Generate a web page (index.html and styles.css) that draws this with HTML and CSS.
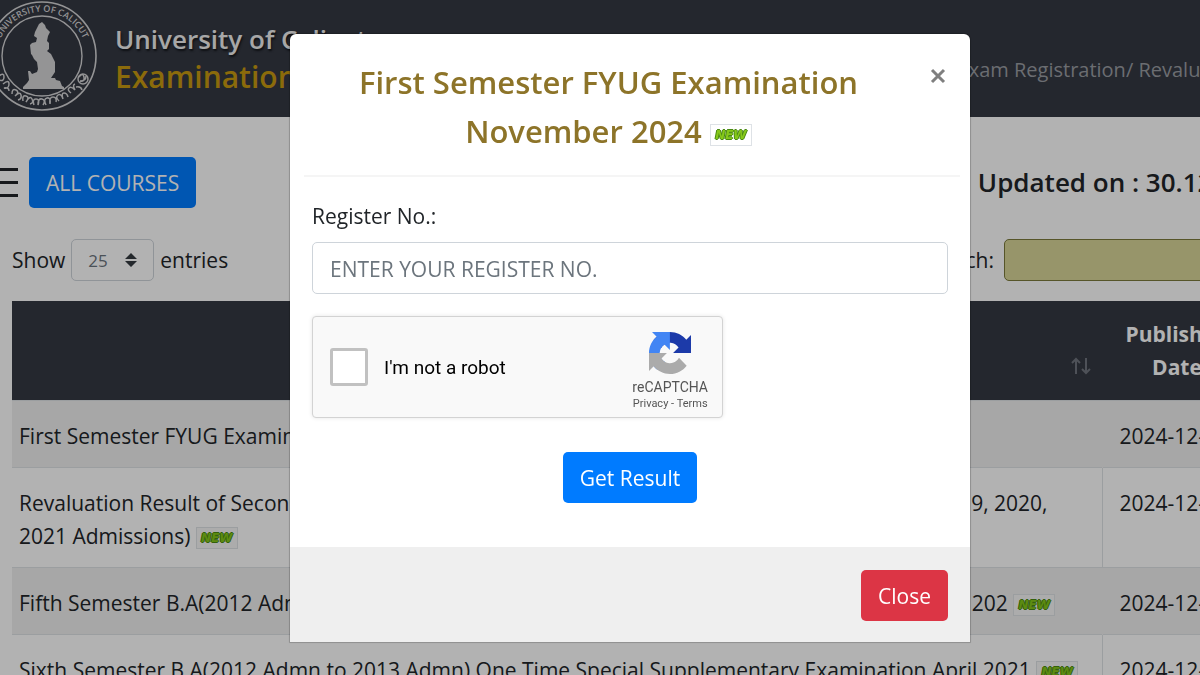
FILE: index.html
```html
<!DOCTYPE html>
<html lang="en">
<head>
    <meta charset="utf-8">
    <meta name="viewport" content="width=device-width, initial-scale=1">
    <title>University of Calicut - Examinations</title>
    <link rel="stylesheet" href="styles.css">
</head>
<body>
<div class="page">
    <header class="topbar">
        <svg class="seal" width="98" height="112" viewBox="0 0 98 112" aria-hidden="true">
            <defs>
                <path id="ringTop" d="M-1 70 A45 45 0 1 1 85 70"/>
            </defs>
            <g fill="none" stroke="#d4d4d6">
                <circle cx="42" cy="56" r="54" stroke-width="1.6"/>
                <circle cx="42" cy="56" r="40" stroke-width="1.4"/>
                <!-- lower script band -->
                <g stroke-width="1.5">
                    <path d="M-1 76q5-4 5 1t-5 3M3 84q6-5 6 0t-5 4q5-1 5 3M12 94q0-6 4-4t-1 6q5-5 6-1t-3 5M23 101q-1-6 3-5t0 6q4-7 6-3t-2 5M34 105q-2-6 2-6t2 6q0-7 4-6t1 6M46 105q-3-6 1-7t3 6q-1-7 3-7t3 5M59 101q-4-4-1-6t5 4q-2-6 1-6t4 4M71 93q-4-3-2-5t6 2q-3-5 0-6"/>
                    <circle cx="83" cy="79" r="5"/>
                    <path d="M79 77q4-5 5 0t-4 4q6 0 6-5M76 87q5-1 6 3"/>
                </g>
            </g>
            <text class="seal-text"><textPath href="#ringTop" startOffset="50%">UNIVERSITY OF CALICUT</textPath></text>
            <path fill="#d4d4d6" d="M42 22l3 3 1 3 4 4-2 4-1 5 2 2v6l-2 2 4 3 4 8v10l-4 6 4 0 1 2 4 1 2 5 2 1v2H23v-2l4-4 2-3-1-9 2 0 2 3 5-2 1-3-1-7-3-3-2-4-1-1-1-9 2-2 4-1 1-4-3-2 1-4 2-4 2-4z"/>
        </svg>
        <div class="brand">
            <div class="brand-name">University of Calicut</div>
            <div class="brand-sub">Examinations</div>
        </div>
        <nav class="topnav">
            <a href="#">Exam Registration/ Revaluation</a>
        </nav>
    </header>

    <main class="content">
        <div class="toolbar">
            <button class="menu" type="button" aria-label="Menu"><span></span><span></span><span></span></button>
            <button class="btn btn-primary" type="button">ALL COURSES</button>
            <h2 class="updated">Updated on : 30.12.2024</h2>
        </div>

        <div class="filters">
            <label class="length">Show
                <span class="select-wrap">
                    <select>
                        <option>10</option>
                        <option selected>25</option>
                        <option>50</option>
                    </select>
                    <svg width="12" height="14" viewBox="0 0 12 14" aria-hidden="true"><path fill="#343a40" d="M0 6l6-6 6 6zM0 8h12l-6 6z"/></svg>
                </span>
                entries</label>
            <label class="search">Search: <input type="search"></label>
        </div>

        <table class="results">
            <thead>
                <tr>
                    <th><svg class="sort" width="20" height="18" viewBox="0 0 20 18" aria-hidden="true"><path d="M5 17V2M1 6l4-4 4 4M15 1v15M11 12l4 4 4-4"/></svg></th>
                    <th>Published Date</th>
                </tr>
            </thead>
            <tbody>
                <tr>
                    <td>First Semester FYUG Examination November 2024 <span class="new">NEW</span></td>
                    <td>2024-12-30</td>
                </tr>
                <tr>
                    <td>Revaluation Result of Second Semester B.Com./B.B.A. Degree Examination March 2022 (2018, 2019, 2020,<br>2021 Admissions) <span class="new">NEW</span></td>
                    <td>2024-12-28</td>
                </tr>
                <tr>
                    <td>Fifth Semester B.A(2012 Admn to 2013 Admn) One Time Special Supplementary Examination Nov 202 <span class="new">NEW</span></td>
                    <td>2024-12-28</td>
                </tr>
                <tr>
                    <td>Sixth Semester B.A(2012 Admn to 2013 Admn) One Time Special Supplementary Examination April 2021 <span class="new">NEW</span></td>
                    <td>2024-12-28</td>
                </tr>
            </tbody>
        </table>
    </main>
</div>

<div class="backdrop">
    <div class="modal" role="dialog" aria-labelledby="modalTitle">
        <div class="modal-header">
            <h1 id="modalTitle">First Semester FYUG Examination<br>November 2024 <span class="new">NEW</span></h1>
            <button class="close" type="button" aria-label="Close dialog">
                <svg width="16" height="16" viewBox="0 0 16 16" aria-hidden="true"><path d="M2 2l12 12M14 2L2 14"/></svg>
            </button>
        </div>
        <form class="modal-body">
            <label for="regno">Register No.:</label>
            <input class="regno" id="regno" type="text" placeholder="ENTER YOUR REGISTER NO.">
            <div class="captcha">
                <input id="robot" type="checkbox">
                <label for="robot">I'm not a robot</label>
                <div class="captcha-logo">
                    <svg width="42" height="42" viewBox="0 0 64 64" aria-hidden="true">
                        <path fill="#1c3aa9" d="M64 31.955l-.033-1.37V4.687l-7.16 7.16C50.948 4.674 42.033.093 32.05.093c-10.4 0-19.622 4.96-25.458 12.64l11.736 11.86a15.55 15.55 0 0 1 4.754-5.334c2.05-1.6 4.952-2.906 8.968-2.906.485 0 .86.057 1.135.163 4.976.393 9.288 3.14 11.828 7.124l-8.307 8.307L64 31.953"/>
                        <path fill="#4285f4" d="M31.862.094l-1.37.033H4.594l7.16 7.16C4.58 13.147 0 22.06 0 32.046c0 10.4 4.96 19.622 12.64 25.458L24.5 45.768a15.55 15.55 0 0 1-5.334-4.754c-1.6-2.05-2.906-4.952-2.906-8.968 0-.485.057-.86.163-1.135.393-4.976 3.14-9.288 7.124-11.828l8.307 8.307L31.86.095"/>
                        <path fill="#ababab" d="M.001 32.045l.033 1.37v25.898l7.16-7.16c5.86 7.173 14.774 11.754 24.76 11.754 10.4 0 19.622-4.96 25.458-12.64l-11.736-11.86a15.55 15.55 0 0 1-4.754 5.334c-2.05 1.6-4.952 2.906-8.968 2.906-.485 0-.86-.057-1.135-.163-4.976-.393-9.288-3.14-11.828-7.124l8.307-8.307c-10.522.04-22.4.066-27.295-.005"/>
                    </svg>
                    <div class="captcha-name">reCAPTCHA</div>
                    <div class="captcha-links"><a href="#">Privacy</a> - <a href="#">Terms</a></div>
                </div>
            </div>
            <button class="btn btn-primary submit" type="button">Get Result</button>
        </form>
        <div class="modal-footer">
            <button class="btn btn-danger" type="button">Close</button>
        </div>
    </div>
</div>
</body>
</html>
```
FILE: styles.css
```css
*{
    box-sizing: border-box;
}
body{
    margin: 0;
    height: 100vh;
    overflow: hidden;
    background: #fff;
    color: #212529;
    font-family: "Open Sans", "Noto Sans", sans-serif;
    font-size: 21px;
    line-height: 33px;
}
a{
    color: inherit;
    text-decoration: none;
}
/* the page runs a little wider than the window */
.page{
    width: 107%;
}

/* top bar */
.topbar{
    display: flex;
    align-items: center;
    height: 117px;
    padding-bottom: 5px;
    background: #343842;
}
.seal{
    flex: none;
}
.seal-text{
    fill: #d4d4d6;
    font-size: 9px;
    font-weight: 600;
    text-anchor: middle;
}
.brand{
    margin-left: 17px;
    padding-top: 3px;
    font-weight: 600;
    white-space: nowrap;
}
.brand-name{
    color: #f0f0f0;
    font-size: 26px;
    line-height: 38px;
    text-shadow: 1px 2px 2px #14171c;
}
.brand-sub{
    color: #c89a10;
    font-size: 30px;
    line-height: 38px;
}
.topnav{
    margin-left: auto;
    padding-top: 26px;
    padding-right: 36px;
    color: #9a9da2;
    font-size: 20px;
    white-space: nowrap;
}

/* toolbar */
.content{
    padding: 40px 0 0 12px;
}
.toolbar{
    display: flex;
    align-items: center;
    margin-left: -12px;
}
.menu{
    display: flex;
    flex-direction: column;
    gap: 10px;
    width: 18px;
    margin-right: 11px;
    padding: 0;
    border: 0;
    background: none;
}
.menu span{
    height: 3px;
    background: #212529;
}
.updated{
    margin: 0 0 0 auto;
    padding-right: 5px;
    font-size: 26px;
    font-weight: 600;
    white-space: nowrap;
}
.btn{
    height: 51px;
    padding: 2px 17px 0;
    border: 0;
    border-radius: 5px;
    color: #fff;
    font: inherit;
}
.btn-primary{
    background: #007bff;
}
.btn-danger{
    background: #dc3545;
}
.filters{
    display: flex;
    justify-content: space-between;
    align-items: center;
    margin: 31px 0 20px;
    padding-right: 12px;
}
.length, .search{
    display: flex;
    align-items: center;
    gap: 6px;
}
.search{
    gap: 10px;
}
.select-wrap{
    display: flex;
    align-items: center;
    width: 83px;
    height: 42px;
    border: 1px solid #ced4da;
    border-radius: 5px;
}
.select-wrap svg{
    flex: none;
    margin-right: 16px;
}
.select-wrap select{
    flex: 1;
    min-width: 0;
    height: 40px;
    padding: 0 0 0 16px;
    border: 0;
    background: none;
    appearance: none;
    color: #6c757d;
    font: inherit;
    font-size: 17px;
}
.search input{
    width: 268px;
    height: 42px;
    border: 1px solid #7b7a3c;
    border-radius: 5px;
    background: #d8d698;
}

/* result list */
.results{
    width: 100%;
    border-collapse: collapse;
    table-layout: fixed;
}
.results th{
    padding: 17px 42px 16px 10px;
    background: #343842;
    color: #fff;
    font-weight: 700;
}
.results th:first-child{
    padding-right: 11px;
    vertical-align: bottom;
}
.results th:last-child{
    width: 182px;
}
.sort{
    display: block;
    margin: 0 0 9px auto;
    fill: none;
    stroke: #70757e;
    stroke-width: 2;
}
.results td{
    padding: 19px 0 14px 7px;
    border-top: 1px solid #dee2e6;
    vertical-align: top;
    white-space: nowrap;
}
.results td + td{
    padding-left: 17px;
    border-left: 1px solid #dee2e6;
}
.results tbody tr:nth-child(odd) td{
    border-left-color: transparent;
    background: #f0f0f0;
}
.new{
    display: inline-block;
    width: 42px;
    height: 22px;
    border: 1px solid #dee2e6;
    color: #86c81a;
    background: #fff;
    font: italic 900 12px/20px "DejaVu Sans", sans-serif;
    text-align: center;
    text-shadow: 1px 0 #4a8a12, -1px 0 #4a8a12, 0 1px #4a8a12, 0 -1px #4a8a12;
    vertical-align: middle;
}
.results .new{
    background: #f7f7f7;
}

/* dialog */
.backdrop{
    position: fixed;
    top: 0;
    left: 0;
    width: 105%;
    height: 100%;
    padding-top: 34px;
    background: rgba(0, 0, 0, 0.3);
}
.modal{
    width: 680px;
    max-width: 94%;
    margin: 0 auto;
    border-radius: 6px 6px 0 0;
    background: #fff;
    box-shadow: 0 0 1px 1px rgba(0, 0, 0, 0.2);
}
.modal-header{
    display: flex;
    align-items: flex-start;
    gap: 26px;
    margin: 0 10px 0 14px;
    padding: 24px 14px 19px 9px;
    border-bottom: 2px solid #f5f5f5;
}
.modal-header h1{
    flex: 1;
    margin: 0;
    color: #8d7429;
    font-size: 31px;
    font-weight: 600;
    line-height: 49px;
    text-align: center;
}
.close{
    display: flex;
    margin-top: 10px;
    padding: 0;
    border: 0;
    background: none;
}
.close path{
    fill: none;
    stroke: #7f7f7f;
    stroke-width: 3;
}
.modal-body{
    padding: 23px 22px 44px;
}
.modal-body label{
    display: block;
}
.regno{
    width: 100%;
    height: 52px;
    margin: 9px 0 22px;
    padding: 2px 17px 0;
    border: 1px solid #ced4da;
    border-radius: 5px;
    color: #495057;
    font: inherit;
}
.regno::placeholder{
    color: #6c757d;
    opacity: 1;
}
.captcha{
    display: flex;
    align-items: center;
    width: 411px;
    max-width: 100%;
    height: 102px;
    padding: 0 14px 0 17px;
    border: 1px solid #d3d3d3;
    border-radius: 4px;
    background: #f9f9f9;
    box-shadow: 0 0 4px rgba(0, 0, 0, 0.1);
    color: #000;
    font-family: Roboto, sans-serif;
    font-size: 19px;
}
.captcha input{
    width: 38px;
    height: 38px;
    margin: 0 16px 0 0;
    border: 3px solid #c1c1c1;
    border-radius: 3px;
    background: #fff;
    appearance: none;
}
.captcha-logo{
    margin-left: auto;
    padding-top: 10px;
    color: #555;
    text-align: center;
}
.captcha-logo svg{
    display: block;
    margin: 0 auto 4px;
}
.captcha-name{
    font-size: 14px;
    line-height: 18px;
}
.captcha-links{
    font-size: 11px;
    line-height: 16px;
}
.submit{
    display: block;
    margin: 34px auto 0;
}
.modal-footer{
    display: flex;
    justify-content: flex-end;
    padding: 23px 22px 21px;
    background: #efefef;
}
```
